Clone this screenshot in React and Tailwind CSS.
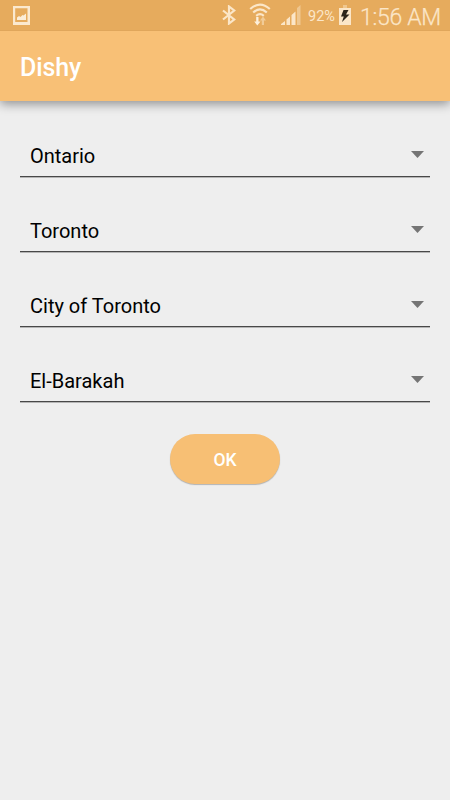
const locations = [
  { id: "province", label: "Ontario" },
  { id: "city", label: "Toronto" },
  { id: "region", label: "City of Toronto" },
  { id: "restaurant", label: "El-Barakah" },
];

function PictureIcon() {
  return (
    <svg width="17" height="19" viewBox="0 0 17 19">
      <path fillRule="evenodd" d="M0 0h17v19H0zM2.200 2.200v13.800h12.300V2.200z" fill="#fbe9cf" />
      <path d="M4 14v-2.500l2-1.500 1.500 1 2-2 1 .5L13 7.500V14z" fill="#fbedd8" />
    </svg>
  );
}

function BluetoothIcon() {
  return (
    <svg width="14" height="20" viewBox="0 0 14 20" fill="none">
      <path d="M1 5.500l11.200 9L7 18.500v-17l5.200 4L1 14.500" stroke="#fbe6c8" strokeWidth="2.200" />
    </svg>
  );
}

function WifiIcon() {
  return (
    <svg width="22" height="23" viewBox="0 0 22 23" fill="none">
      <path d="M1.200 6Q11-2.800 20.800 6M4.200 9.500Q11 3.300 17.800 9.500M7.200 12.800Q11 9.500 14.800 12.800" stroke="#fbe6c8" strokeWidth="2.200" />
      <path d="M7.200 14h2.300v4.500h2L8.300 22.500 5.200 18.500h2z" fill="#fdf0dc" />
      <path d="M12.800 22h2.200v-4.500h2L14 13.500l-3 4h1.800z" fill="#f1cb97" />
    </svg>
  );
}

function SignalIcon() {
  return (
    <svg width="20" height="20" viewBox="0 0 20 20">
      <path d="M0 20v-1l4-3v4zM5.500 20v-5.500L9 11.500V20zM10.500 20v-10l4-3.500V20z" fill="#fbe6c8" />
      <path d="M16 20V3l3.500-3v20z" fill="#efc790" />
    </svg>
  );
}

function BatteryIcon() {
  return (
    <svg width="12" height="20" viewBox="0 0 12 20">
      <path d="M4 0h4v3H4z" fill="#f0c78e" />
      <path d="M0 3h12v17H0z" fill="#fbe6c8" />
      <path d="M4.500 5h5L7 9.500h3.500L3 17l1.800-5.500H2z" fill="#2d2418" />
    </svg>
  );
}

function StatusBar() {
  return (
    <div className="relative z-10 flex h-[31px] items-start border-b border-[#e0a65b] bg-[#e6ab5d] text-[#fbe6c8]">
      <div className="pt-[6px] pl-[13px]">
        <PictureIcon />
      </div>
      <div className="ml-auto flex items-start pr-[10px]">
        <div className="mr-[13px] pt-[5px]">
          <BluetoothIcon />
        </div>
        <div className="mr-[10px] pt-[3px]">
          <WifiIcon />
        </div>
        <div className="mr-[7px] pt-[5px]">
          <SignalIcon />
        </div>
        <span className="w-[31px] pt-[7px] text-[14.500px] leading-[20px] whitespace-nowrap">92%</span>
        <div className="pt-[5px]">
          <BatteryIcon />
        </div>
        <span className="ml-[9px] w-[80px] pt-[4px] text-[23px] leading-[27px] font-light tracking-[-0.300px] whitespace-nowrap [-webkit-text-stroke:0.250px_#fbe6c8]">
          1:56 AM
        </span>
      </div>
    </div>
  );
}

function SelectField({ label }) {
  return (
    <button
      type="button"
      className="flex h-[45px] w-full items-center justify-between border-b border-[#484848] pr-[6px] pl-[10px] text-left text-[20px] leading-[24px] text-black shadow-[0_1px_0_#b5b5b5]"
    >
      <span className="pt-[3px]">{label}</span>
      <svg width="13" height="7" viewBox="0 0 13 7" fill="#757575">
        <path d="M0 0h13L6.500 7z" />
      </svg>
    </button>
  );
}

function App() {
  return (
    <div className="flex h-screen w-full flex-col overflow-hidden bg-[#eeeeee] font-['Roboto',sans-serif]">
      <StatusBar />
      <header className="flex h-[70px] items-center bg-[#f8c076] pt-[4px] pl-[20px] shadow-[0_3px_10px_rgba(0,0,0,0.4)]">
        <h1 className="text-[25px] leading-[30px] font-medium tracking-[-0.100px] text-white">Dishy</h1>
      </header>

      <main className="flex flex-col items-center px-[20px] pt-[31px]">
        <div className="flex w-full flex-col gap-[30px]">
          {locations.map((location) => (
            <SelectField key={location.id} label={location.label} />
          ))}
        </div>
        <button
          type="button"
          className="mt-[32px] h-[50px] w-[110px] rounded-full bg-[#f7bf74] pt-[2px] text-[17.500px] font-medium text-white shadow-[0_1px_1px_rgba(0,0,0,0.25)]"
        >
          OK
        </button>
      </main>
    </div>
  );
}

export default App;
